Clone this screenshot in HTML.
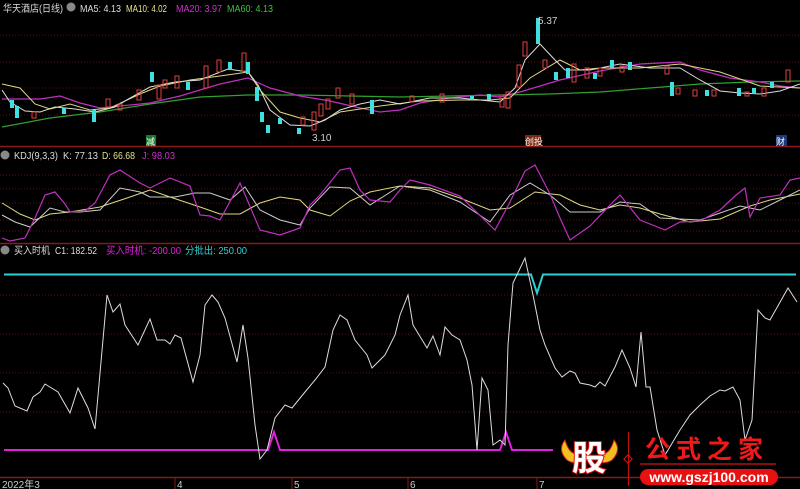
<!DOCTYPE html>
<html><head><meta charset="utf-8"><style>
html,body{margin:0;padding:0;background:#000;width:800px;height:489px;overflow:hidden}
svg text{font-family:"Liberation Sans","Noto Sans CJK SC",sans-serif}
</style></head><body>
<svg width="800" height="489" viewBox="0 0 800 489" xmlns="http://www.w3.org/2000/svg">
<rect width="800" height="489" fill="#000"/>
<g stroke="#5a1010" stroke-dasharray="1,2" stroke-width="1">
<line x1="0" y1="35" x2="800" y2="35"/><line x1="0" y1="62" x2="800" y2="62"/><line x1="0" y1="88" x2="800" y2="88"/><line x1="0" y1="115" x2="800" y2="115"/>
<line x1="0" y1="175" x2="800" y2="175"/><line x1="0" y1="189" x2="800" y2="189"/><line x1="0" y1="203" x2="800" y2="203"/><line x1="0" y1="220" x2="800" y2="220"/><line x1="0" y1="231" x2="800" y2="231"/>
<line x1="0" y1="295" x2="800" y2="295"/><line x1="0" y1="334" x2="800" y2="334"/><line x1="0" y1="373" x2="800" y2="373"/><line x1="0" y1="412" x2="800" y2="412"/>
</g>
<g stroke="#8a1818" stroke-width="1.5">
<line x1="0" y1="146.5" x2="800" y2="146.5"/><line x1="0" y1="243.5" x2="800" y2="243.5"/><line x1="0" y1="477.5" x2="800" y2="477.5"/>
</g>
<g stroke="#8a1818"><line x1="175" y1="477" x2="175" y2="489"/><line x1="292" y1="477" x2="292" y2="489"/><line x1="408" y1="477" x2="408" y2="489"/><line x1="537" y1="477" x2="537" y2="489"/></g>
<!-- header texts -->
<text x="3" y="12" font-size="10" fill="#ddd" textLength="60" lengthAdjust="spacingAndGlyphs">华天酒店(日线)</text>
<circle cx="71" cy="7" r="4.5" fill="#888"/>
<text x="80" y="12" font-size="10" fill="#ddd" textLength="41" lengthAdjust="spacingAndGlyphs">MA5: 4.13</text>
<text x="126" y="12" font-size="10" fill="#e8e090" textLength="41" lengthAdjust="spacingAndGlyphs">MA10: 4.02</text>
<text x="176" y="12" font-size="10" fill="#d030d0" textLength="46" lengthAdjust="spacingAndGlyphs">MA20: 3.97</text>
<text x="227" y="12" font-size="10" fill="#40c040" textLength="46" lengthAdjust="spacingAndGlyphs">MA60: 4.13</text>
<circle cx="5" cy="155" r="4.5" fill="#888"/>
<text x="14" y="159" font-size="10" fill="#ddd" textLength="44" lengthAdjust="spacingAndGlyphs">KDJ(9,3,3)</text>
<text x="63" y="159" font-size="10" fill="#ddd" textLength="35" lengthAdjust="spacingAndGlyphs">K: 77.13</text>
<text x="102" y="159" font-size="10" fill="#e8e090" textLength="33" lengthAdjust="spacingAndGlyphs">D: 66.68</text>
<text x="142" y="159" font-size="10" fill="#d030d0" textLength="33" lengthAdjust="spacingAndGlyphs">J: 98.03</text>
<circle cx="5" cy="250" r="4.5" fill="#888"/>
<text x="14" y="254" font-size="10" fill="#ddd" textLength="36" lengthAdjust="spacingAndGlyphs">买入时机</text>
<text x="55" y="254" font-size="10" fill="#ddd" textLength="42" lengthAdjust="spacingAndGlyphs">C1: 182.52</text>
<text x="106" y="254" font-size="10" fill="#e020e0" textLength="75" lengthAdjust="spacingAndGlyphs">买入时机: -200.00</text>
<text x="185" y="254" font-size="10" fill="#30d0d0" textLength="62" lengthAdjust="spacingAndGlyphs">分批出: 250.00</text>
<!-- main MA lines -->
<polyline fill="none" stroke="#30a030" stroke-width="1.2" points="2,127 50,118 100,112 150,104 200,97 248,95 300,95 350,96 400,97 450,96 500,95 550,94 600,92 650,88 700,84 750,82 800,81"/>
<polyline fill="none" stroke="#c030c0" stroke-width="1.2" points="2,99 40,99 60,96 80,103 100,108 150,103 180,96 220,84 248,78 270,88 300,96 330,101 360,108 380,112 400,110 420,103 450,98 480,95 500,97 520,92 560,80 600,71 640,64 680,62 700,70 730,78 760,82 780,86 800,88"/>
<polyline fill="none" stroke="#e0d880" stroke-width="1" points="2,84 20,88 35,104 50,109 70,104 90,110 110,108 140,94 160,86 190,80 220,76 248,72 260,90 280,112 300,118 320,122 340,112 380,106 420,101 460,100 490,100 510,98 530,78 560,60 580,70 600,68 640,68 680,64 720,72 760,86 800,88"/>
<polyline fill="none" stroke="#ddd" stroke-width="1" points="2,90 10,102 25,111 40,112 55,107 75,109 95,112 115,107 130,98 150,87 175,82 200,80 228,69 248,72 258,85 270,110 290,125 310,126 325,120 340,110 360,104 380,100 400,104 430,98 460,98 480,100 500,102 515,88 525,60 540,44 555,60 565,70 590,70 620,64 650,68 680,68 700,80 720,91 740,93 760,94 780,91 800,84"/>
<!-- candles -->
<g stroke="#e04040" fill="none" stroke-width="1">
<rect x="32" y="112" width="4" height="6"/><rect x="106" y="99" width="4" height="8"/><rect x="118" y="104" width="4" height="6"/><rect x="137" y="90" width="4" height="10"/><rect x="157" y="85" width="4" height="14"/><rect x="163" y="80" width="4" height="8"/><rect x="175" y="76" width="4" height="12"/><rect x="204" y="66" width="4" height="22"/><rect x="217" y="60" width="4" height="12"/><rect x="242" y="53" width="4" height="18"/><rect x="301" y="117" width="4" height="8"/><rect x="312" y="112" width="4" height="18"/><rect x="319" y="104" width="4" height="12"/><rect x="326" y="99" width="4" height="10"/><rect x="336" y="88" width="4" height="10"/><rect x="350" y="94" width="4" height="10"/><rect x="410" y="96" width="4" height="6"/><rect x="440" y="94" width="4" height="8"/><rect x="500" y="95" width="4" height="12"/><rect x="506" y="92" width="4" height="16"/><rect x="517" y="65" width="4" height="22"/><rect x="523" y="42" width="4" height="14"/><rect x="543" y="60" width="4" height="8"/><rect x="572" y="64" width="4" height="18"/><rect x="585" y="68" width="4" height="10"/><rect x="598" y="68" width="4" height="8"/><rect x="620" y="66" width="4" height="6"/><rect x="665" y="66" width="4" height="8"/><rect x="676" y="88" width="4" height="6"/><rect x="693" y="90" width="4" height="6"/><rect x="712" y="90" width="4" height="6"/><rect x="745" y="92" width="4" height="4"/><rect x="762" y="88" width="4" height="8"/><rect x="786" y="70" width="4" height="12"/>
</g>
<g fill="#40e0e0">
<rect x="10" y="100" width="4" height="8"/><rect x="15" y="106" width="4" height="12"/><rect x="62" y="108" width="4" height="6"/><rect x="92" y="110" width="4" height="12"/><rect x="150" y="72" width="4" height="10"/><rect x="186" y="82" width="4" height="8"/><rect x="228" y="62" width="4" height="8"/><rect x="246" y="62" width="4" height="12"/><rect x="255" y="87" width="4" height="14"/><rect x="260" y="112" width="4" height="10"/><rect x="266" y="125" width="4" height="8"/><rect x="278" y="118" width="4" height="6"/><rect x="297" y="128" width="4" height="6"/><rect x="370" y="100" width="4" height="14"/><rect x="470" y="96" width="4" height="4"/><rect x="487" y="94" width="4" height="6"/><rect x="536" y="18" width="4" height="26"/><rect x="554" y="72" width="4" height="8"/><rect x="566" y="68" width="4" height="10"/><rect x="593" y="73" width="4" height="6"/><rect x="610" y="60" width="4" height="8"/><rect x="628" y="62" width="4" height="8"/><rect x="670" y="82" width="4" height="14"/><rect x="705" y="90" width="4" height="6"/><rect x="737" y="88" width="4" height="8"/><rect x="752" y="88" width="4" height="6"/><rect x="770" y="82" width="4" height="6"/>
</g>
<text x="538" y="24" font-size="10" fill="#ccc">5.37</text>
<text x="312" y="141" font-size="10" fill="#ccc">3.10</text>
<rect x="146" y="135" width="10" height="11" fill="#1a7a2a"/><text x="146" y="145" font-size="9" fill="#fff">减</text>
<rect x="525" y="135" width="16" height="11" fill="#7a2a10"/><text x="525" y="145" font-size="9" fill="#fff">创投</text>
<rect x="776" y="135" width="11" height="11" fill="#1a3a7a"/><text x="776" y="145" font-size="9" fill="#fff">财</text>
<!-- KDJ -->
<polyline fill="none" stroke="#e0d880" stroke-width="1" points="2,203 20,214 35,220 50,214 70,212 100,207 130,197 150,190 170,197 200,207 220,214 240,214 260,203 280,197 300,200 310,210 330,216 350,201 370,192 400,186 430,188 460,198 490,210 510,208 535,192 560,195 580,205 600,210 620,205 640,208 660,214 690,222 720,219 750,206 770,200 800,194"/>
<polyline fill="none" stroke="#ccc" stroke-width="1" points="2,215 15,222 30,227 50,208 65,212 80,212 100,210 120,188 140,192 150,197 175,197 195,193 210,193 230,200 245,187 260,210 280,220 300,225 310,208 330,187 350,188 370,205 400,186 430,190 460,202 490,222 510,195 530,183 550,195 570,212 600,212 620,202 640,204 660,218 700,220 740,206 760,210 780,200 800,190"/>
<polyline fill="none" stroke="#c030c0" stroke-width="1.2" points="2,238 10,241 25,238 35,218 45,195 55,192 65,204 70,212 85,211 95,203 110,175 120,170 140,183 150,188 170,178 190,186 200,215 210,216 220,220 240,183 260,230 280,235 300,228 310,205 320,195 340,170 350,168 360,190 370,200 390,202 400,190 410,180 430,185 460,196 495,230 510,202 525,171 535,165 550,194 560,218 570,240 590,226 610,205 620,195 640,220 665,230 680,222 700,221 720,210 735,196 745,188 750,217 760,198 780,195 790,180 800,178"/>
<!-- bottom panel -->
<polyline fill="none" stroke="#30d0d0" stroke-width="2" points="4,274.5 531,274.5 537,293 543,274.5 796,274.5"/>
<polyline fill="none" stroke="#e020e0" stroke-width="2" points="4,450 268,450 274,432 280,450 500,450 506,432 512,450 553,450"/>
<polyline fill="none" stroke="#ddd" stroke-width="1" points="3,383 8,388 15,406 27,411 33,397 40,392 45,384 58,392 70,413 78,388 88,408 95,429 107,295 113,312 120,304 125,325 138,345 150,319 157,340 165,340 170,344 175,335 181,338 193,382 200,355 205,305 212,295 218,302 225,318 237,362 243,325 248,358 255,425 260,459 267,450 275,418 285,405 292,408 305,392 315,380 325,367 333,330 340,315 347,320 355,340 367,355 372,368 385,355 395,335 400,315 408,295 413,325 427,348 433,336 440,355 445,327 452,335 460,340 467,360 472,385 477,450 482,378 488,390 493,445 500,440 505,445 508,345 513,283 525,258 533,295 540,330 545,345 555,368 562,377 570,371 575,373 580,383 590,385 595,387 600,382 605,386 615,367 622,350 630,368 636,387 641,332 646,387 650,387 657,430 665,455 680,430 690,415 700,405 710,396 720,390 725,391 733,387 740,400 745,440 752,420 758,310 765,318 770,320 788,288 797,302"/>
<text x="2" y="488" font-size="10" fill="#ccc">2022年3</text>
<text x="177" y="488" font-size="10" fill="#ccc">4</text>
<text x="294" y="488" font-size="10" fill="#ccc">5</text>
<text x="410" y="488" font-size="10" fill="#ccc">6</text>
<text x="539" y="488" font-size="10" fill="#ccc">7</text>
<!-- watermark logo -->
<path d="M565,440 q-8,10 2,20 q6,4 12,2 l-2,-8 q-8,0 -12,-14z" fill="#f0c020" stroke="#d02020" stroke-width="1"/>
<path d="M614,440 q8,10 -2,20 q-6,4 -12,2 l2,-8 q8,0 12,-14z" fill="#f0c020" stroke="#d02020" stroke-width="1"/>
<text x="572" y="470" font-size="34" font-weight="bold" fill="#fff" stroke="#e01010" stroke-width="2" paint-order="stroke" font-family="'Noto Sans CJK SC',sans-serif">股</text>
<line x1="628.5" y1="432" x2="628.5" y2="486" stroke="#c01010"/>
<rect x="625" y="456" width="6" height="6" fill="none" stroke="#e01010" transform="rotate(45 628 459)"/>
<text x="645" y="458" font-size="25" font-weight="bold" fill="#f01818" letter-spacing="6" font-family="'Noto Serif CJK SC',serif">公式之家</text>
<line x1="640" y1="464" x2="776" y2="464" stroke="#b01010" stroke-width="1.5"/>
<rect x="640" y="469" width="138" height="16" rx="8" fill="#e81010"/>
<text x="709" y="482" font-size="14" font-weight="bold" fill="#fff" text-anchor="middle">www.gszj100.com</text>
</svg>
</body></html>
